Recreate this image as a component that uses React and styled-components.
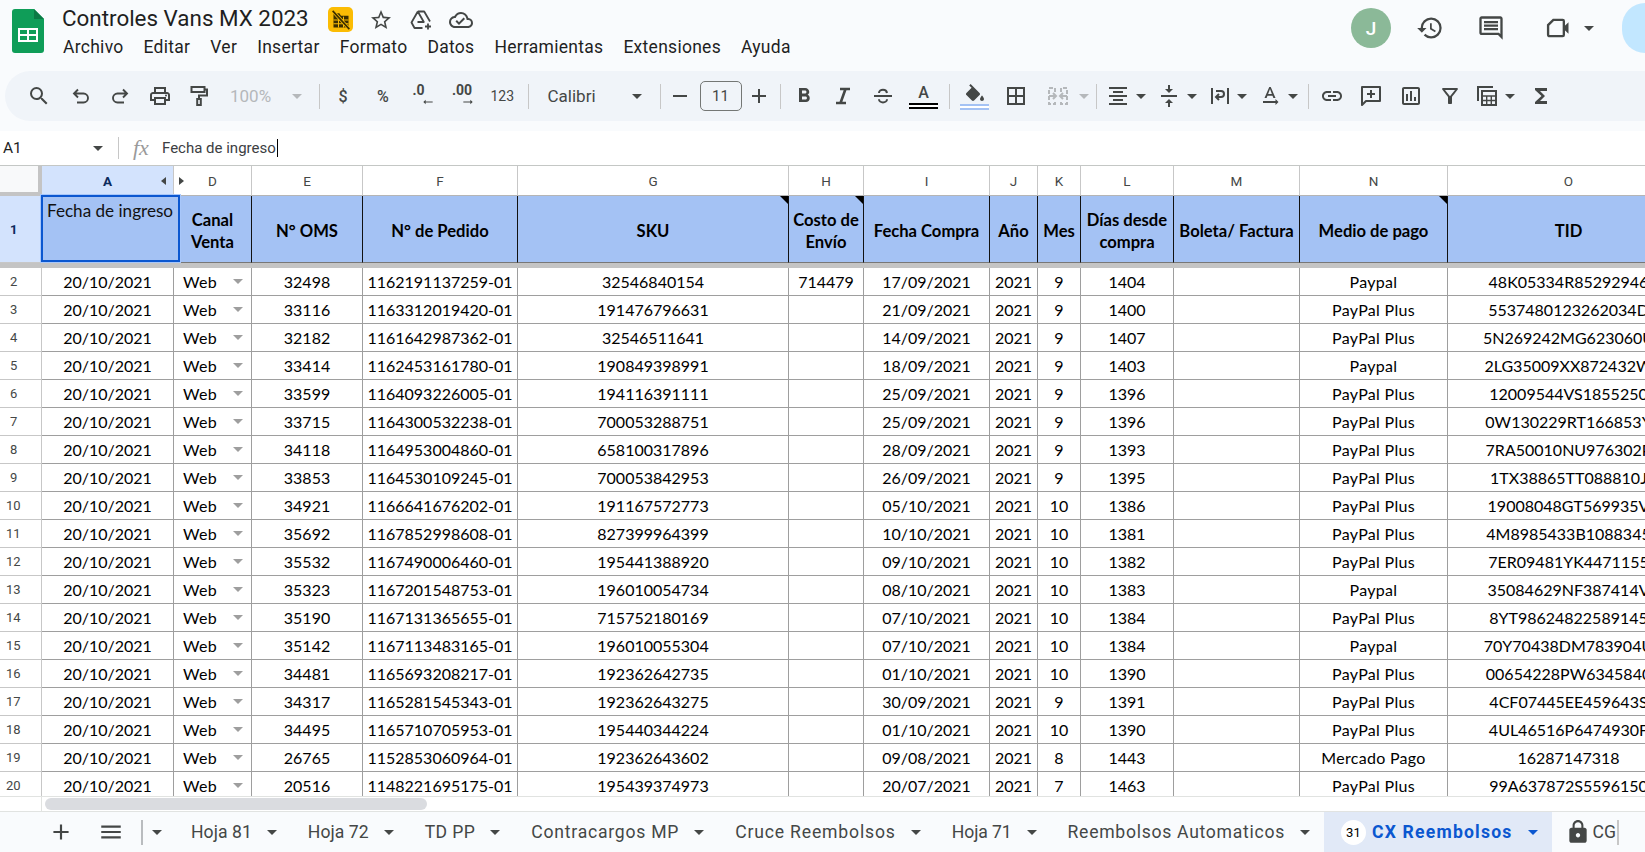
import React from "react";
import styled, { createGlobalStyle } from "styled-components";
import {
  MdAdd,
  MdArrowRightAlt,
  MdBorderAll,
  MdChevronLeft,
  MdFormatAlignCenter,
  MdFormatBold,
  MdFunctions,
  MdHistory,
  MdLink,
  MdLock,
  MdMenu,
  MdOutlineAssessment,
  MdOutlineCloudDone,
  MdOutlineComment,
  MdOutlineFilterAlt,
  MdOutlinePrint,
  MdRemove,
  MdSearch,
  MdStarBorder,
  MdTextRotationNone,
  MdVerticalAlignCenter,
} from "react-icons/md";

const GRID_COLUMNS = "42px 132px 78px 111px 155px 271px 75px 126px 48px 43px 93px 126px 148px 242px";
const UI_FONT = `Roboto, "Liberation Sans", sans-serif`;
const CELL_FONT = `Lato, "Liberation Sans", sans-serif`;
const ICON_COLOR = "#444746";

const GlobalStyle = createGlobalStyle`
  html, body {
    margin: 0;
    padding: 0;
    overflow: hidden;
    background: #fff;
  }
`;

const Page = styled.div`
  display: flex;
  flex-direction: column;
  width: 1645px;
  height: 852px;
  overflow: hidden;
  font-family: ${UI_FONT};
`;

const Header = styled.header`
  flex: none;
  height: 131px;
  background: #f9fbfd;
`;

const TopBar = styled.div`
  display: flex;
  align-items: flex-start;
  height: 71px;
`;

const LogoWrap = styled.div`
  flex: none;
  width: 32px;
  height: 44px;
  margin: 9px 18px 0 12px;
`;

const TitleColumn = styled.div`
  display: flex;
  flex-direction: column;
`;

const TitleRow = styled.div`
  display: flex;
  align-items: center;
  height: 25px;
  margin-top: 7px;
`;

const DocTitle = styled.div`
  width: 244px;
  font-size: 22.4px;
  line-height: 25px;
  color: #1f1f1f;
  white-space: nowrap;
  margin-top: -3px;
`;

const OffBadge = styled.div`
  display: flex;
  align-items: center;
  justify-content: center;
  width: 25px;
  height: 25px;
  margin-left: 22px;
  background: #fbbc04;
  border-radius: 5px;
`;

const TitleIcon = styled.span`
  display: flex;
  flex: none;
  margin-left: 16px;
  font-size: 24px;
  color: ${ICON_COLOR};
`;

const MenuBar = styled.nav`
  display: flex;
  margin-top: 4px;
  padding-left: 1px;
  height: 22px;
  align-items: center;
`;

const MenuItem = styled.span`
  margin-right: 20px;
  font-size: 17.5px;
  letter-spacing: 0.28px;
  color: #1f1f1f;
  white-space: nowrap;
`;

const Actions = styled.div`
  display: flex;
  align-items: center;
  height: 50px;
  margin-left: auto;
  margin-top: 3px;
`;

const Avatar = styled.div`
  display: flex;
  align-items: center;
  justify-content: center;
  width: 40px;
  height: 40px;
  border-radius: 50%;
  background: #8bb998;
  color: #fff;
  font-size: 19px;
  font-weight: 500;
`;

const ActionIcon = styled.span`
  display: flex;
  flex: none;
  margin-left: ${({ $gap }) => $gap}px;
  font-size: 28px;
  color: ${ICON_COLOR};
`;

const SharePill = styled.div`
  flex: none;
  width: 23px;
  height: 50px;
  margin-left: 28.5px;
  background: #c2e7ff;
  border-radius: 25px 0 0 25px;
`;

const Toolbar = styled.div`
  display: flex;
  align-items: center;
  height: 50px;
  margin-left: 5px;
  background: #f0f4f9;
  border-radius: 25px 0 0 25px;
`;

const Tool = styled.span`
  display: flex;
  flex: none;
  align-items: center;
  justify-content: center;
  width: 24px;
  height: 24px;
  margin-left: ${({ $gap }) => $gap}px;
  font-size: 24px;
  color: ${({ $muted }) => ($muted ? "#b5b8bb" : ICON_COLOR)};
`;

const Caret = styled.span`
  flex: none;
  width: 0;
  height: 0;
  margin-left: ${({ $gap = 0 }) => $gap}px;
  border-left: 5px solid transparent;
  border-right: 5px solid transparent;
  border-top: 5px solid ${({ $color = ICON_COLOR }) => $color};
`;

const ToolDivider = styled.span`
  flex: none;
  width: 1px;
  height: 25px;
  margin-left: ${({ $gap }) => $gap}px;
  background: #c7c7c7;
`;

const ToolText = styled.span`
  flex: none;
  width: ${({ $w }) => $w}px;
  margin-left: ${({ $gap }) => $gap}px;
  font-size: ${({ $size = 16 }) => $size}px;
  font-weight: ${({ $strong }) => ($strong ? 500 : 400)};
  text-align: ${({ $center }) => ($center ? "center" : "left")};
  color: ${({ $muted }) => ($muted ? "#b5b8bb" : ICON_COLOR)};
  white-space: nowrap;
`;

const SizeBox = styled.span`
  display: flex;
  flex: none;
  align-items: center;
  justify-content: center;
  width: 42px;
  height: 30px;
  margin-left: ${({ $gap }) => $gap}px;
  box-sizing: border-box;
  border: 1px solid #747775;
  border-radius: 5px;
  font-size: 15px;
  color: ${ICON_COLOR};
`;

const DecimalGlyph = styled.span`
  display: flex;
  flex: none;
  flex-direction: column;
  align-items: center;
  box-sizing: border-box;
  width: 24px;
  padding-right: ${({ $flip }) => ($flip ? 7 : 0)}px;
  margin-left: ${({ $gap }) => $gap}px;
  font-size: 14px;
  line-height: 13px;
  font-weight: 700;
  color: ${ICON_COLOR};
  svg {
    margin: -2px ${({ $flip }) => ($flip ? -8 : -1)}px 0 0;
    font-size: 14px;
    align-self: flex-end;
    transform: ${({ $flip }) => ($flip ? "scaleX(-1)" : "none")};
  }
`;

const ColorGlyph = styled.span`
  display: flex;
  flex: none;
  flex-direction: column;
  align-items: center;
  width: 29px;
  margin-left: ${({ $gap }) => $gap}px;
  font-size: 16px;
  font-weight: 500;
  line-height: 18px;
  color: ${ICON_COLOR};
`;

const ColorBar = styled.span`
  display: block;
  width: 29px;
  height: 6px;
  margin-top: 1px;
  box-sizing: border-box;
  border-top: 2px solid ${({ $color }) => $color};
  border-bottom: 2px solid ${({ $color }) => $color};
  background: #fff;
`;

const FormulaBar = styled.div`
  display: flex;
  flex: none;
  align-items: center;
  height: 35px;
  box-sizing: border-box;
  border-bottom: 1px solid #c4c7c5;
  background: #fff;
`;

const NameBox = styled.span`
  width: 90px;
  padding-left: 3px;
  font-size: 15.5px;
  color: #1f1f1f;
`;

const FormulaDivider = styled.span`
  width: 1px;
  height: 22px;
  margin-left: 15px;
  background: #c7c7c7;
`;

const FxMark = styled.span`
  width: 18px;
  margin-left: 14px;
  font-family: "Liberation Serif", serif;
  font-style: italic;
  font-size: 22px;
  color: #9a9a9a;
`;

const FormulaText = styled.span`
  margin-left: 11px;
  font-size: 15px;
  color: #3c4043;
  white-space: nowrap;
`;

const TextCursor = styled.span`
  width: 1px;
  height: 18px;
  margin-left: 1px;
  background: #000;
`;

const Sheet = styled.main`
  position: relative;
  flex: none;
  width: 1689px;
  height: 646px;
  overflow: hidden;
  background: #fff;
`;

const GridRow = styled.div`
  display: grid;
  grid-template-columns: ${GRID_COLUMNS};
  height: ${({ $h }) => $h}px;
`;

const Corner = styled.div`
  box-sizing: border-box;
  border-right: 4px solid #c4c4c4;
  border-bottom: 4px solid #c4c4c4;
  background: #f8f9fa;
`;

const ColumnLabel = styled.div`
  position: relative;
  display: flex;
  align-items: center;
  justify-content: center;
  box-sizing: border-box;
  border-right: 1px solid #c7c7c7;
  border-bottom: 1px solid #b5b5b5;
  background: ${({ $active }) => ($active ? "#d3e3fd" : "#fff")};
  font-size: 13.5px;
  font-weight: ${({ $active }) => ($active ? 700 : 400)};
  color: ${({ $active }) => ($active ? "#0b2a5c" : "#444746")};
`;

const HiddenArrow = styled.span`
  position: absolute;
  top: 11px;
  width: 0;
  height: 0;
  border-top: 4px solid transparent;
  border-bottom: 4px solid transparent;
  ${({ $side }) =>
    $side === "left"
      ? "right: 7px; border-right: 5px solid #444746;"
      : "left: 5px; border-left: 5px solid #444746;"}
`;

const RowLabel = styled.div`
  display: flex;
  align-items: center;
  box-sizing: border-box;
  padding-left: ${({ $wide }) => ($wide ? 6 : 10)}px;
  border-right: 1px solid #c7c7c7;
  border-bottom: 1px solid #c7c7c7;
  background: ${({ $active }) => ($active ? "#d3e3fd" : "#fff")};
  font-size: 13px;
  font-weight: ${({ $active }) => ($active ? 700 : 400)};
  color: ${({ $active }) => ($active ? "#0b2a5c" : "#444746")};
`;

const HeadCell = styled.div`
  position: relative;
  display: flex;
  align-items: center;
  justify-content: center;
  box-sizing: border-box;
  padding: 3px 1px 0;
  border-right: 1px solid #111;
  border-bottom: 1px solid #777;
  background: #a4c2f4;
  font-family: ${CELL_FONT};
  font-size: 16.6px;
  font-weight: 700;
  line-height: 22px;
  text-align: center;
  color: #000;
  white-space: pre-line;
  &::after {
    content: "";
    display: ${({ $note }) => ($note ? "block" : "none")};
    position: absolute;
    top: 0;
    right: 0;
    border-top: 8px solid #000;
    border-left: 8px solid transparent;
  }
`;

const CellEditor = styled.div`
  position: absolute;
  top: 29px;
  left: 41px;
  width: 139px;
  height: 67px;
  box-sizing: border-box;
  padding: 3px 0 0 4px;
  border: 2px solid #0b57d0;
  outline: 1px solid #a8c7fa;
  background: #a4c2f4;
  font-family: ${CELL_FONT};
  font-size: 17.1px;
  color: #111;
  white-space: nowrap;
`;

const FreezeBar = styled.div`
  height: 5px;
  background: #c4c4c4;
`;

const RowsViewport = styled.div`
  height: 528px;
  overflow: hidden;
`;

const Cell = styled.div`
  display: flex;
  align-items: center;
  justify-content: ${({ $left }) => ($left ? "space-between" : "center")};
  box-sizing: border-box;
  padding: ${({ $left }) => ($left ? "0 8px 0 9px" : "0")};
  border-right: 1px solid #9e9e9e;
  border-bottom: 1px solid #9e9e9e;
  font-family: ${CELL_FONT};
  font-size: 16px;
  letter-spacing: ${({ $words }) => ($words ? "0.3px" : "0")};
  color: #000;
  white-space: nowrap;
  overflow: hidden;
`;

const ScrollStrip = styled.div`
  display: flex;
  height: 16px;
  box-sizing: border-box;
  border-top: 1px solid #e1e3e1;
  border-bottom: 1px solid #e1e3e1;
`;

const ScrollCorner = styled.div`
  width: 42px;
  box-sizing: border-box;
  border-right: 1px solid #e1e3e1;
`;

const ScrollThumb = styled.div`
  width: 382px;
  height: 12px;
  margin: 1px 0 0 3px;
  border-radius: 6px;
  background: #dadce0;
`;

const TabBar = styled.footer`
  display: flex;
  flex: none;
  align-items: center;
  height: 40px;
  background: #f9fbfd;
  overflow: hidden;
`;

const TabTool = styled.span`
  display: flex;
  flex: none;
  margin-left: ${({ $gap }) => $gap}px;
  font-size: 26px;
  color: ${ICON_COLOR};
`;

const TabDivider = styled.span`
  flex: none;
  width: 2px;
  height: 25px;
  margin-left: ${({ $gap }) => $gap}px;
  background: #b9bcbf;
`;

const Tab = styled.div`
  display: flex;
  flex: none;
  align-items: center;
  height: 40px;
  padding: 0 14px 0 17px;
  margin-left: ${({ $gap = 0 }) => $gap}px;
  background: ${({ $active }) => ($active ? "#e1e9f7" : "transparent")};
  color: ${({ $active }) => ($active ? "#0b57d0" : "#444746")};
  font-size: 17.6px;
  font-weight: ${({ $active }) => ($active ? 700 : 400)};
  letter-spacing: ${({ $spacing }) => $spacing}px;
  white-space: nowrap;
`;

const TabCaret = styled(Caret)`
  margin-left: 15px;
`;

const TabBadge = styled.span`
  display: flex;
  align-items: center;
  justify-content: center;
  width: 25px;
  height: 25px;
  margin-right: 6px;
  border-radius: 50%;
  background: #fff;
  color: #000;
  font-size: 13px;
  font-weight: 400;
  letter-spacing: 0;
`;

const LockedTab = styled.div`
  display: flex;
  flex: none;
  align-items: center;
  margin-left: 13px;
  width: 64px;
  color: #444746;
  font-size: 17.6px;
  svg {
    flex: none;
    font-size: 26px;
  }
`;

const ClippedName = styled.span`
  width: 24px;
  height: 25px;
  line-height: 25px;
  margin-left: 2px;
  overflow: hidden;
  border-right: 2px solid #c7c7c7;
`;

const SheetsLogo = () => (
  <svg width="32" height="44" viewBox="0 0 32 44">
    <path d="M3 0h19l10 10v31a3 3 0 0 1-3 3H3a3 3 0 0 1-3-3V3a3 3 0 0 1 3-3z" fill="#0f9d58" />
    <path d="M22 0l10 10H22z" fill="#0b7a45" />
    <path
      d="M6 19h20v14H6z M8 21v4h7v-4z M17 21v4h7v-4z M8 27v4h7v-4z M17 27v4h7v-4z"
      fill="#fff"
      fillRule="evenodd"
    />
  </svg>
);

const NoSyncIcon = () => (
  <svg width="20" height="20" viewBox="0 0 24 24">
    <path d="M3 4h7l2 3h9v14H3z" fill="#3b2f00" />
    <path d="M9 8v13M15 8v13M3 12h18M3 16.5h18" stroke="#fbbc04" strokeWidth="1.2" />
    <path d="M2 1l20 22" stroke="#fbbc04" strokeWidth="4" />
    <path d="M2 1l20 22" stroke="#3b2f00" strokeWidth="2" />
  </svg>
);

const DriveAddIcon = () => (
  <svg width="24" height="24" viewBox="0 0 24 24" fill="none" stroke={ICON_COLOR} strokeWidth="1.8">
    <path d="M8.8 3.5h6.4l5.8 10M8.8 3.5L2.5 14.5l3 5.5h8M8.8 3.5l6 10.5H8.5" strokeLinejoin="round" />
    <path d="M19 15.5v6M16 18.5h6" />
  </svg>
);

const MeetIcon = () => (
  <svg width="28" height="28" viewBox="0 0 24 24" fill="none">
    <path d="M8 5h8a1 1 0 0 1 1 1v12a1 1 0 0 1-1 1H5a1.5 1.5 0 0 1-1.5-1.5V9.5z" stroke={ICON_COLOR} strokeWidth="2" />
    <path d="M17 11l4-4v10l-4-4z" fill={ICON_COLOR} />
  </svg>
);

const UndoIcon = () => (
  <svg width="24" height="24" viewBox="0 0 24 24" fill="none" stroke={ICON_COLOR} strokeWidth="1.9">
    <path d="M9 5.5L5 9.5l4 4M5 9.5h9.5a4.5 4.5 0 0 1 0 9H8" />
  </svg>
);

const RedoIcon = () => (
  <svg width="24" height="24" viewBox="0 0 24 24" fill="none" stroke={ICON_COLOR} strokeWidth="1.9">
    <path d="M15 5.5l4 4-4 4M19 9.5H9.5a4.5 4.5 0 0 0 0 9H16" />
  </svg>
);

const PaintIcon = () => (
  <svg width="24" height="24" viewBox="0 0 24 24" fill="none" stroke={ICON_COLOR} strokeWidth="2">
    <path d="M4.5 3h13v5h-13z" />
    <path d="M17.5 5.5H20v6h-8V15" />
    <path d="M10.2 15h3.6v6h-3.6z" />
  </svg>
);

const ItalicIcon = () => (
  <svg width="24" height="24" viewBox="0 0 24 24" fill="none" stroke={ICON_COLOR} strokeWidth="2.6">
    <path d="M9 5h10M5 19h10M14.5 5l-5 14" />
  </svg>
);

const StrikeIcon = () => (
  <svg width="24" height="24" viewBox="0 0 24 24" fill="none" stroke={ICON_COLOR} strokeWidth="2">
    <path d="M3 12h18" />
    <path d="M16 9c-.3-2-2-3.2-4-3.2S8 7 8 9M16 15.2c0 2-2 3.2-4 3.2s-4-1.2-4-3.2" />
  </svg>
);

const FillIcon = () => (
  <svg width="24" height="20" viewBox="0 0 24 18" fill={ICON_COLOR}>
    <path d="M16.56 8.94L7.62 0 6.21 1.41l2.38 2.38-5.15 5.15c-.59.59-.59 1.54 0 2.12l5.5 5.5c.29.29.68.44 1.06.44s.77-.15 1.06-.44l5.5-5.5c.59-.58.59-1.53 0-2.12zM19 11.5s-2 2.17-2 3.5c0 1.1.9 2 2 2s2-.9 2-2c0-1.33-2-3.5-2-3.5z" />
  </svg>
);

const MergeIcon = () => (
  <svg width="24" height="24" viewBox="0 0 24 24" fill="none" stroke="#b5b8bb" strokeWidth="2">
    <path d="M9 8V4H3v16h6v-4M15 8V4h6v16h-6v-4" strokeDasharray="4 2" />
    <path d="M3 12h7M7 9l3 3-3 3M21 12h-7M17 9l-3 3 3 3" />
  </svg>
);

const WrapIcon = () => (
  <svg width="24" height="24" viewBox="0 0 24 24" fill="none" stroke={ICON_COLOR} strokeWidth="2">
    <path d="M4 4v16M20 4v16" />
    <path d="M8 7h5a3 3 0 0 1 0 6H9" />
    <path d="M11 10l-3 3 3 3" />
  </svg>
);

const AddCommentIcon = () => (
  <svg width="24" height="24" viewBox="0 0 24 24" fill="none" stroke={ICON_COLOR} strokeWidth="2">
    <path d="M3 3h18v14H7l-4 4z" strokeLinejoin="round" />
    <path d="M12 6v8M8 10h8" />
  </svg>
);

const TableStackIcon = () => (
  <svg width="24" height="24" viewBox="0 0 24 24" fill="none" stroke={ICON_COLOR} strokeWidth="2">
    <path d="M3 17V3h15" />
    <path d="M7 7h14v14H7z" />
    <path d="M7 12h14M7 16.5h14M11.7 12v9M16.3 12v9" strokeWidth="1.4" />
  </svg>
);

const DATE = "20/10/2021";
const PLUS = "PayPal Plus";

const ROWS = [
  [2, "32498", "1162191137259-01", "32546840154", "714479", "17/09/2021", "9", "1404", "Paypal", "48K05334R85292946"],
  [3, "33116", "1163312019420-01", "191476796631", "", "21/09/2021", "9", "1400", PLUS, "5537480123262034D"],
  [4, "32182", "1161642987362-01", "32546511641", "", "14/09/2021", "9", "1407", PLUS, "5N269242MG623060U"],
  [5, "33414", "1162453161780-01", "190849398991", "", "18/09/2021", "9", "1403", "Paypal", "2LG35009XX872432W"],
  [6, "33599", "1164093226005-01", "194116391111", "", "25/09/2021", "9", "1396", PLUS, "12009544VS1855250"],
  [7, "33715", "1164300532238-01", "700053288751", "", "25/09/2021", "9", "1396", PLUS, "0W130229RT166853Y"],
  [8, "34118", "1164953004860-01", "658100317896", "", "28/09/2021", "9", "1393", PLUS, "7RA50010NU976302P"],
  [9, "33853", "1164530109245-01", "700053842953", "", "26/09/2021", "9", "1395", PLUS, "1TX38865TT088810J"],
  [10, "34921", "1166641676202-01", "191167572773", "", "05/10/2021", "10", "1386", PLUS, "19008048GT569935V"],
  [11, "35692", "1167852998608-01", "827399964399", "", "10/10/2021", "10", "1381", PLUS, "4M8985433B1088345"],
  [12, "35532", "1167490006460-01", "195441388920", "", "09/10/2021", "10", "1382", PLUS, "7ER09481YK4471155"],
  [13, "35323", "1167201548753-01", "196010054734", "", "08/10/2021", "10", "1383", "Paypal", "35084629NF387414V"],
  [14, "35190", "1167131365655-01", "715752180169", "", "07/10/2021", "10", "1384", PLUS, "8YT98624822589145"],
  [15, "35142", "1167113483165-01", "196010055304", "", "07/10/2021", "10", "1384", "Paypal", "70Y70438DM783904U"],
  [16, "34481", "1165693208217-01", "192362642735", "", "01/10/2021", "10", "1390", PLUS, "00654228PW6345840"],
  [17, "34317", "1165281545343-01", "192362643275", "", "30/09/2021", "9", "1391", PLUS, "4CF07445EE459643S"],
  [18, "34495", "1165710705953-01", "195440344224", "", "01/10/2021", "10", "1390", PLUS, "4UL46516P6474930F"],
  [19, "26765", "1152853060964-01", "192362643602", "", "09/08/2021", "8", "1443", "Mercado Pago", "16287147318"],
  [20, "20516", "1148221695175-01", "195439374973", "", "20/07/2021", "7", "1463", PLUS, "99A637872S5596150"],
];

const HEADS = [
  { label: "Canal\nVenta" },
  { label: "N° OMS" },
  { label: "N° de Pedido" },
  { label: "SKU", note: true },
  { label: "Costo de\nEnvío", note: true },
  { label: "Fecha Compra" },
  { label: "Año" },
  { label: "Mes" },
  { label: "Días desde\ncompra" },
  { label: "Boleta/ Factura" },
  { label: "Medio de pago", note: true },
  { label: "TID" },
];

const MENUS = ["Archivo", "Editar", "Ver", "Insertar", "Formato", "Datos", "Herramientas", "Extensiones", "Ayuda"];

const TABS = [
  { name: "Hoja 81", spacing: 0.05, gap: 12 },
  { name: "Hoja 72", spacing: 0.05 },
  { name: "TD PP", spacing: 0.4 },
  { name: "Contracargos MP", spacing: 0.75 },
  { name: "Cruce Reembolsos", spacing: 0.83 },
  { name: "Hoja 71", spacing: -0.1 },
  { name: "Reembolsos Automaticos", spacing: 0.71 },
];

const TopSection = () => (
  <Header>
    <TopBar>
      <LogoWrap>
        <SheetsLogo />
      </LogoWrap>
      <TitleColumn>
        <TitleRow>
          <DocTitle>Controles Vans MX 2023</DocTitle>
          <OffBadge>
            <NoSyncIcon />
          </OffBadge>
          <TitleIcon>
            <MdStarBorder />
          </TitleIcon>
          <TitleIcon>
            <DriveAddIcon />
          </TitleIcon>
          <TitleIcon>
            <MdOutlineCloudDone />
          </TitleIcon>
        </TitleRow>
        <MenuBar>
          {MENUS.map((name) => (
            <MenuItem key={name}>{name}</MenuItem>
          ))}
        </MenuBar>
      </TitleColumn>
      <Actions>
        <Avatar>J</Avatar>
        <ActionIcon $gap={24.5}>
          <MdHistory />
        </ActionIcon>
        <ActionIcon $gap={33.5}>
          <MdOutlineComment />
        </ActionIcon>
        <ActionIcon $gap={39}>
          <MeetIcon />
        </ActionIcon>
        <Caret $gap={11.5} />
        <SharePill />
      </Actions>
    </TopBar>
    <Toolbar>
      <Tool $gap={21.5}><MdSearch /></Tool>
      <Tool $gap={18.5}><UndoIcon /></Tool>
      <Tool $gap={15}><RedoIcon /></Tool>
      <Tool $gap={16}><MdOutlinePrint /></Tool>
      <Tool $gap={15}><PaintIcon /></Tool>
      <ToolText $gap={19} $w={45} $size={17} $muted>100%</ToolText>
      <Caret $gap={17} $color="#b5b8bb" />
      <ToolDivider $gap={17} />
      <ToolText $gap={11} $w={24} $size={16} $center $strong>$</ToolText>
      <ToolText $gap={16} $w={24} $size={16} $center $strong>%</ToolText>
      <DecimalGlyph $gap={15} $flip>.0<MdArrowRightAlt /></DecimalGlyph>
      <DecimalGlyph $gap={16}>.00<MdArrowRightAlt /></DecimalGlyph>
      <ToolText $gap={16.5} $w={23} $size={14}>123</ToolText>
      <ToolDivider $gap={14} />
      <ToolText $gap={19} $w={53} $size={17}>Calibri</ToolText>
      <Caret $gap={31} />
      <ToolDivider $gap={18} />
      <Tool $gap={7}><MdRemove /></Tool>
      <SizeBox $gap={8}>11</SizeBox>
      <Tool $gap={5.6}><MdAdd /></Tool>
      <ToolDivider $gap={9.4} />
      <Tool $gap={11}><MdFormatBold /></Tool>
      <Tool $gap={15}><ItalicIcon /></Tool>
      <Tool $gap={16}><StrikeIcon /></Tool>
      <ColorGlyph $gap={13.5}>A<ColorBar $color="#000" /></ColorGlyph>
      <ToolDivider $gap={11.5} />
      <ColorGlyph $gap={10}><FillIcon /><ColorBar $color="#a4c2f4" /></ColorGlyph>
      <Tool $gap={14.5}><MdBorderAll /></Tool>
      <Tool $gap={18}><MergeIcon /></Tool>
      <Caret $gap={9} $color="#b5b8bb" />
      <ToolDivider $gap={7} />
      <Tool $gap={9.5}><MdFormatAlignCenter /></Tool>
      <Caret $gap={5.5} />
      <Tool $gap={10.6}><MdVerticalAlignCenter /></Tool>
      <Caret $gap={6} />
      <Tool $gap={11}><WrapIcon /></Tool>
      <Caret $gap={5.3} />
      <Tool $gap={11}><MdTextRotationNone /></Tool>
      <Caret $gap={6} />
      <ToolDivider $gap={10} />
      <Tool $gap={11}><MdLink /></Tool>
      <Tool $gap={15}><AddCommentIcon /></Tool>
      <Tool $gap={16}><MdOutlineAssessment /></Tool>
      <Tool $gap={15}><MdOutlineFilterAlt /></Tool>
      <Tool $gap={13}><TableStackIcon /></Tool>
      <Caret $gap={6} />
      <Tool $gap={14}><MdFunctions /></Tool>
    </Toolbar>
  </Header>
);

const Formula = () => (
  <FormulaBar>
    <NameBox>A1</NameBox>
    <Caret />
    <FormulaDivider />
    <FxMark>fx</FxMark>
    <FormulaText>Fecha de ingreso</FormulaText>
    <TextCursor />
  </FormulaBar>
);

const SheetGrid = () => (
  <Sheet>
    <GridRow $h={30}>
      <Corner />
      <ColumnLabel $active>
        A<HiddenArrow $side="left" />
      </ColumnLabel>
      <ColumnLabel>
        D<HiddenArrow $side="right" />
      </ColumnLabel>
      {["E", "F", "G", "H", "I", "J", "K", "L", "M", "N", "O"].map((letter) => (
        <ColumnLabel key={letter}>{letter}</ColumnLabel>
      ))}
    </GridRow>
    <GridRow $h={67}>
      <RowLabel $active>1</RowLabel>
      <HeadCell />
      {HEADS.map((head) => (
        <HeadCell key={head.label} $note={head.note}>
          {head.label}
        </HeadCell>
      ))}
    </GridRow>
    <CellEditor>Fecha de ingreso</CellEditor>
    <FreezeBar />
    <RowsViewport>
      {ROWS.map(([num, oms, order, sku, cost, bought, month, days, method, tid]) => (
        <GridRow key={num} $h={28}>
          <RowLabel $wide={num > 9}>{num}</RowLabel>
          <Cell>{DATE}</Cell>
          <Cell $left $words>
            Web
            <Caret $color="#9e9e9e" />
          </Cell>
          <Cell>{oms}</Cell>
          <Cell>{order}</Cell>
          <Cell>{sku}</Cell>
          <Cell>{cost}</Cell>
          <Cell>{bought}</Cell>
          <Cell>2021</Cell>
          <Cell>{month}</Cell>
          <Cell>{days}</Cell>
          <Cell />
          <Cell $words>{method}</Cell>
          <Cell>{tid}</Cell>
        </GridRow>
      ))}
    </RowsViewport>
    <ScrollStrip>
      <ScrollCorner />
      <ScrollThumb />
    </ScrollStrip>
  </Sheet>
);

const SheetTabs = () => (
  <TabBar>
    <TabTool $gap={48}><MdAdd /></TabTool>
    <TabTool $gap={24}><MdMenu /></TabTool>
    <TabDivider $gap={17} />
    <Caret $gap={9} />
    {TABS.map(({ name, spacing, gap }) => (
      <Tab key={name} $spacing={spacing} $gap={gap}>
        {name}
        <TabCaret />
      </Tab>
    ))}
    <Tab $active $spacing={1.2}>
      <TabBadge>31</TabBadge>
      CX Reembolsos
      <TabCaret $color="#0b57d0" />
    </Tab>
    <LockedTab>
      <MdLock />
      <ClippedName>CG</ClippedName>
    </LockedTab>
    <TabTool $gap={8}><MdChevronLeft /></TabTool>
  </TabBar>
);

const App = () => (
  <Page>
    <GlobalStyle />
    <TopSection />
    <Formula />
    <SheetGrid />
    <SheetTabs />
  </Page>
);

export default App;
